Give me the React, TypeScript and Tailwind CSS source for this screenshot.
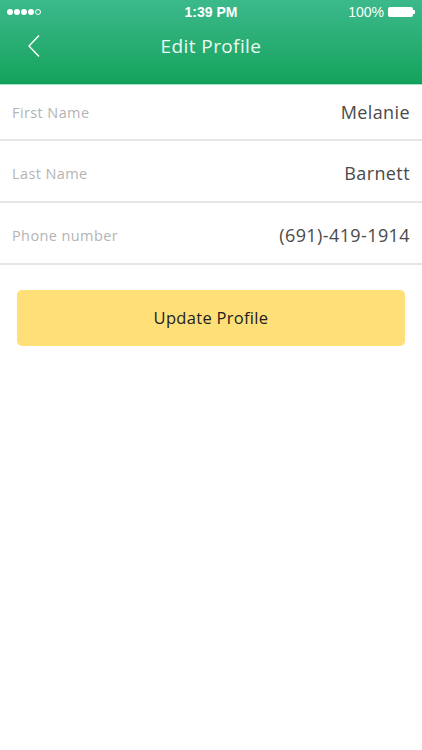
import React from 'react';

const rows = [
  { label: 'First Name', value: 'Melanie', cls: 'h-[56px]' },
  { label: 'Last Name', value: 'Barnett', cls: 'h-[62px] pt-[4px]' },
  { label: 'Phone number', value: '(691)-419-1914', cls: 'h-[62px] pt-[4px]' },
];

export default function App() {
  return (
    <div className="w-[422px] h-[750px] bg-white font-['Open_Sans',sans-serif] overflow-hidden">
      <header className="h-[84px] bg-gradient-to-b from-[#3bb98b] to-[#11a35c] text-white border-b border-[#0f9a55]">
        <div className="relative h-[24px] flex items-center justify-between px-[7px]">
          <div className="flex items-center gap-[1px]">
            <span className="w-[6px] h-[6px] rounded-full bg-white" />
            <span className="w-[6px] h-[6px] rounded-full bg-white" />
            <span className="w-[6px] h-[6px] rounded-full bg-white" />
            <span className="w-[6px] h-[6px] rounded-full bg-white" />
            <span className="w-[6px] h-[6px] rounded-full border border-white" />
          </div>
          <div className="absolute left-0 right-0 text-center text-[14px] font-semibold font-['Liberation_Sans',sans-serif]">
            1:39 PM
          </div>
          <div className="flex items-center gap-[4px] text-[14px] font-['Liberation_Sans',sans-serif]">
            <span>100%</span>
            <div className="flex items-center">
              <span className="w-[25px] h-[10px] rounded-[2px] bg-white" />
              <span className="w-[2px] h-[4px] bg-white rounded-r-[1px]" />
            </div>
          </div>
        </div>
        <div className="relative h-[44px] flex items-center justify-center">
          <svg className="absolute left-[26px] top-[10px]" width="16" height="24" viewBox="0 0 16 24" fill="none">
            <path d="M13 1.5 L3 12 L13 22.5" stroke="white" strokeWidth="1.4" />
          </svg>
          <h1 className="text-[19px] tracking-[0.4px] text-[#eefaf3]">Edit Profile</h1>
        </div>
      </header>
      <div className="h-[1px] bg-[#a8e6c8]" />
      <div>
        {rows.map((r) => (
          <div key={r.label} className={`${r.cls} flex items-center justify-between px-[12px] border-b-2 border-[#e6e6e6]`}>
            <span className="text-[14.5px] text-[#b4b4b4] tracking-[0.4px] pt-[2px]">{r.label}</span>
            <span className="text-[18px] text-[#4a4a4a] tracking-[0.4px]">{r.value}</span>
          </div>
        ))}
      </div>
      <div className="px-[17px] pt-[25px]">
        <button className="w-full h-[56px] rounded-[5px] bg-[#ffdf78] text-[16.5px] text-[#222] tracking-[0.3px]">
          Update Profile
        </button>
      </div>
    </div>
  );
}
